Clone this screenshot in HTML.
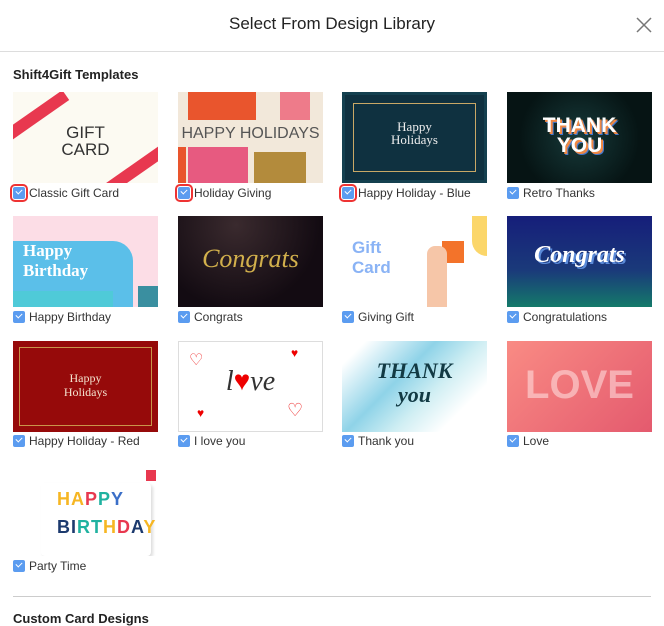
<!DOCTYPE html>
<html><head><meta charset="utf-8"><style>
*{margin:0;padding:0;box-sizing:border-box}
body{width:664px;height:623px;overflow:hidden;background:#fff;font-family:"Liberation Sans",Arial,sans-serif;color:#333;position:relative}
.title{position:absolute;top:14px;left:0;width:664px;text-align:center;font-size:17px;color:#222}
.x{position:absolute;left:636px;top:17px}
.hr{position:absolute;left:0;width:664px;height:1px;background:#ddd;top:51px}
.h{position:absolute;left:13px;font-weight:bold;font-size:13px;color:#222}
.card{position:absolute;width:145px;height:91px;overflow:hidden}
.lab{position:absolute;font-size:12px;color:#333;white-space:nowrap;height:16px;line-height:16px}
.cb{display:inline-block;width:12px;height:12px;background:#5b9cf0;border-radius:2px;vertical-align:-2px;margin-right:4px;position:relative}
.cb:after{content:"";position:absolute;left:3px;top:2px;width:5px;height:3px;border-left:1.5px solid #fff;border-bottom:1.5px solid #fff;transform:rotate(-45deg)}
.red{outline:2px solid #e33;outline-offset:1px}
.t{position:absolute;width:100%;text-align:center}
</style></head><body>
<div class="title">Select From Design Library</div>
<svg class="x" width="16" height="16"><path d="M1 1L15 15M15 1L1 15" stroke="#777" stroke-width="1.5"/></svg>
<div class="hr"></div>
<div class="h" style="top:67px">Shift4Gift Templates</div>

<div class="card" style="left:13px;top:92px;background:#fcfaf2">
<div style="position:absolute;left:-20px;top:20px;width:80px;height:12px;background:#e8384f;transform:rotate(-35deg)"></div>
<div style="position:absolute;left:80px;top:70px;width:90px;height:12px;background:#e8384f;transform:rotate(-35deg)"></div>
<div class="t" style="top:32px;font-size:17px;line-height:17px;color:#333">GIFT<br>CARD</div></div>
<div class="card" style="left:178px;top:92px;background:#f2e8da">
<div style="position:absolute;left:10px;top:0;width:68px;height:28px;background:#e9552d"></div>
<div style="position:absolute;left:102px;top:0;width:30px;height:28px;background:#ee7b8a"></div>
<div style="position:absolute;left:10px;top:55px;width:60px;height:36px;background:#e75a80"></div>
<div style="position:absolute;left:76px;top:60px;width:52px;height:31px;background:#b38b3c"></div>
<div style="position:absolute;left:0;top:55px;width:8px;height:36px;background:#e9552d"></div>
<div class="t" style="top:33px;font-size:16px;color:#555">HAPPY HOLIDAYS</div></div>
<div class="card" style="left:342px;top:92px;background:#0f3140;border:3px solid #14404f">
<div style="position:absolute;left:8px;top:8px;right:8px;bottom:8px;border:1px solid #c9a866"></div>
<div class="t" style="top:25px;font-family:'Liberation Serif',serif;font-size:13px;color:#eee;line-height:13px">Happy<br>Holidays</div></div>
<div class="card" style="left:507px;top:92px;background:radial-gradient(circle at 50% 50%,#173a3a,#061414 70%)">
<div class="t" style="top:24px;font-size:21px;font-weight:bold;color:#fff;line-height:20px;text-shadow:2px 2px 0 #e84,3px 3px 0 #47c">THANK<br>YOU</div></div>
<div class="lab" style="left:13px;top:185px"><span class="cb red"></span>Classic Gift Card</div>
<div class="lab" style="left:178px;top:185px"><span class="cb red"></span>Holiday Giving</div>
<div class="lab" style="left:342px;top:185px"><span class="cb red"></span>Happy Holiday - Blue</div>
<div class="lab" style="left:507px;top:185px"><span class="cb"></span>Retro Thanks</div>

<div class="card" style="left:13px;top:216px;background:#fcdde6">
<div style="position:absolute;left:0;top:25px;width:120px;height:66px;background:#5bbfe9;border-radius:0 20px 0 0"></div>
<div style="position:absolute;left:0;top:75px;width:100px;height:16px;background:#4fcad8"></div>
<div style="position:absolute;left:125px;top:70px;width:20px;height:21px;background:#3a8fa0"></div>
<div style="position:absolute;left:10px;top:25px;font-family:'Liberation Serif',serif;font-weight:bold;font-size:17px;color:#fff;line-height:20px">Happy<br>Birthday</div></div>
<div class="card" style="left:178px;top:216px;background:radial-gradient(circle at 40% 10%,#3a2a2e,#130b12 70%)">
<div class="t" style="top:28px;font-family:'Liberation Serif',serif;font-style:italic;font-size:26px;color:#d2b04c">Congrats</div></div>
<div class="card" style="left:342px;top:216px;background:#fff">
<div style="position:absolute;left:10px;top:22px;font-size:17px;color:#8ab3f5;line-height:20px;font-weight:bold">Gift<br>Card</div>
<div style="position:absolute;left:100px;top:25px;width:22px;height:22px;background:#f3732a"></div>
<div style="position:absolute;left:85px;top:30px;width:20px;height:61px;background:#f6c6a8;border-radius:8px 8px 0 0"></div>
<div style="position:absolute;left:130px;top:0;width:15px;height:40px;background:#fbd66a;border-radius:0 0 0 15px"></div></div>
<div class="card" style="left:507px;top:216px;background:linear-gradient(#161e7a,#1a3a7a 60%,#147a6a)">
<div class="t" style="top:26px;font-family:'Liberation Serif',serif;font-style:italic;font-weight:bold;font-size:24px;color:#fff;text-shadow:2px 2px 0 #5a8ad8">Congrats</div></div>
<div class="lab" style="left:13px;top:309px"><span class="cb"></span>Happy Birthday</div>
<div class="lab" style="left:178px;top:309px"><span class="cb"></span>Congrats</div>
<div class="lab" style="left:342px;top:309px"><span class="cb"></span>Giving Gift</div>
<div class="lab" style="left:507px;top:309px"><span class="cb"></span>Congratulations</div>

<div class="card" style="left:13px;top:341px;background:#960a0a">
<div style="position:absolute;left:6px;top:6px;right:6px;bottom:6px;border:1px solid #c9944a"></div>
<div class="t" style="top:30px;font-family:'Liberation Serif',serif;font-size:12px;color:#f4e4d0;line-height:14px">Happy<br>Holidays</div></div>
<div class="card" style="left:178px;top:341px;background:#fff;border:1px solid #ddd">
<div class="t" style="top:24px;font-family:'Liberation Serif',serif;font-style:italic;font-size:28px;color:#333">l<span style="color:#e00">♥</span>ve</div>
<div style="position:absolute;left:10px;top:8px;color:#e33;font-size:16px">♡</div>
<div style="position:absolute;left:112px;top:4px;color:#e00;font-size:12px">♥</div>
<div style="position:absolute;left:108px;top:58px;color:#e33;font-size:18px">♡</div>
<div style="position:absolute;left:18px;top:64px;color:#e00;font-size:12px">♥</div></div>
<div class="card" style="left:342px;top:341px;background:linear-gradient(135deg,#fff 10%,#8fd3e8 40%,#cfeef3 60%,#fff 80%)">
<div class="t" style="top:18px;font-family:'Liberation Serif',serif;font-style:italic;font-weight:bold;font-size:22px;color:#123a44;line-height:24px">THANK<br>you</div></div>
<div class="card" style="left:507px;top:341px;background:linear-gradient(135deg,#f98b84,#e45a6e)">
<div class="t" style="top:22px;font-size:40px;font-weight:bold;color:rgba(255,230,230,.55)">LOVE</div></div>
<div class="lab" style="left:13px;top:433px"><span class="cb"></span>Happy Holiday - Red</div>
<div class="lab" style="left:178px;top:433px"><span class="cb"></span>I love you</div>
<div class="lab" style="left:342px;top:433px"><span class="cb"></span>Thank you</div>
<div class="lab" style="left:507px;top:433px"><span class="cb"></span>Love</div>

<div class="card" style="left:13px;top:465px;background:#fff">
<div style="position:absolute;left:28px;top:18px;width:110px;height:73px;background:#fff;box-shadow:2px 2px 3px #ddd;border-radius:4px"></div>
<div style="position:absolute;left:44px;top:20px;font-weight:bold;font-size:18px;line-height:28px;letter-spacing:1px"><span style="color:#f6b623">HA</span><span style="color:#e8384f">P</span><span style="color:#1fb2a0">P</span><span style="color:#3b6fc8">Y</span><br><span style="color:#1c3a6e">BI</span><span style="color:#1fb2a0">RT</span><span style="color:#f6b623">H</span><span style="color:#e8384f">D</span><span style="color:#1c3a6e">A</span><span style="color:#f6b623">Y</span></div>
<div style="position:absolute;left:133px;top:5px;width:10px;height:11px;background:#e8384f"></div></div>
<div class="lab" style="left:13px;top:558px"><span class="cb"></span>Party Time</div>

<div style="position:absolute;left:13px;top:596px;width:638px;height:1px;background:#ccc"></div>
<div class="h" style="top:611px">Custom Card Designs</div>
</body></html>
